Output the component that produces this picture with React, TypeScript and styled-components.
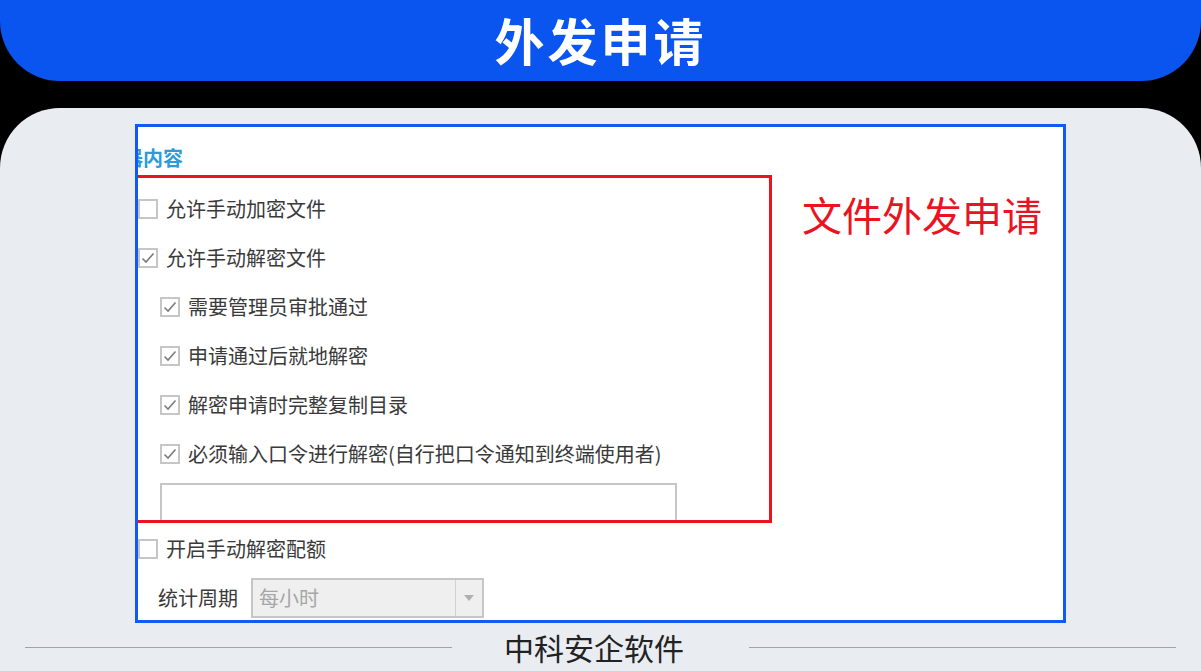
import styled, { createGlobalStyle } from 'styled-components'

const GlobalStyle = createGlobalStyle`
  html, body {
    margin: 0;
    padding: 0;
    background: #000;
  }
  body {
    font-family: 'Noto Sans CJK SC', 'Noto Sans', sans-serif;
  }
`

const Page = styled.div`
  width: 1201px;
  height: 671px;
  overflow: hidden;
  background: #000;
`

const Header = styled.header`
  height: 81px;
  background: #0a55f0;
  border-radius: 0 0 60px 60px;
  display: flex;
  align-items: center;
  justify-content: center;
  padding-bottom: 4px;
  box-sizing: border-box;
`

const Title = styled.h1`
  margin: 0;
  color: #fff;
  font-size: 50px;
  line-height: 1;
  font-weight: 700;
  letter-spacing: 3px;
`

const Panel = styled.main`
  margin-top: 27px;
  height: 563px;
  background: #e9ecf1;
  border-radius: 60px 60px 0 0;
  padding-top: 16px;
  box-sizing: border-box;
  display: flex;
  flex-direction: column;
`

const Frame = styled.section`
  position: relative;
  margin-left: 135px;
  width: 931px;
  height: 499px;
  box-sizing: border-box;
  border: 3px solid #1458f6;
  background: #fff;
  overflow: hidden;
`

const Content = styled.div`
  padding-top: 16px;
  display: flex;
  flex-direction: column;
`

const GroupTitle = styled.div`
  margin-left: -15px;
  height: 30px;
  line-height: 30px;
  margin-bottom: 11.5px;
  font-size: 20px;
  font-weight: 700;
  color: #2b9bd9;
  white-space: nowrap;
`

const Row = styled.label<{ $indent?: boolean }>`
  height: 49px;
  display: flex;
  align-items: center;
  padding-left: ${(p) => (p.$indent ? '22px' : '0')};
  gap: 8px;
  color: #3a3a3a;
  font-size: 20px;
  line-height: 24px;
  white-space: nowrap;
`

const Box = styled.span`
  width: 20px;
  height: 20px;
  box-sizing: border-box;
  border: 2px solid #c6c6c6;
  background: #fff;
  display: flex;
  align-items: center;
  justify-content: center;
  flex: none;
`

const PassInput = styled.div`
  margin: 4.5px 0 3.5px 22px;
  width: 517px;
  height: 38px;
  box-sizing: border-box;
  border: 2px solid #c6c6c6;
  border-bottom: none;
  background: #fff;
`

const FieldRow = styled.div`
  height: 49px;
  display: flex;
  align-items: center;
  padding-left: 20px;
  font-size: 20px;
  line-height: 24px;
  color: #3a3a3a;
`

const Select = styled.div`
  margin-left: 13px;
  width: 233px;
  height: 40px;
  box-sizing: border-box;
  border: 2px solid #c6c6c6;
  background: #efefef;
  display: flex;
`

const SelectValue = styled.span`
  flex: 1;
  padding-left: 6px;
  display: flex;
  align-items: center;
  color: #a6a6a6;
`

const SelectArrow = styled.span`
  width: 26px;
  border-left: 1px solid #d2d2d2;
  display: flex;
  align-items: center;
  justify-content: center;
  &::after {
    content: '';
    border-left: 5px solid transparent;
    border-right: 5px solid transparent;
    border-top: 6px solid #b0b0b0;
  }
`

const RedBox = styled.div`
  position: absolute;
  top: 47.5px;
  left: -3px;
  width: 637px;
  height: 348px;
  box-sizing: border-box;
  border: 3px solid #e9141f;
  pointer-events: none;
`

const RedNote = styled.div`
  position: absolute;
  top: 66.5px;
  left: 664px;
  font-size: 40px;
  line-height: 40px;
  color: #e9141f;
  white-space: nowrap;
`

const Footer = styled.footer`
  height: 48px;
  display: flex;
  align-items: center;
  padding: 0 25px;
`

const Rule = styled.span<{ $w?: number }>`
  height: 1px;
  background: #a3a3a3;
  ${(p) => (p.$w ? `width: ${p.$w}px;` : 'flex: 1;')}
`

const Brand = styled.span`
  margin: 0 65px 0 52px;
  font-size: 30px;
  line-height: 36px;
  color: #222;
  white-space: nowrap;
`

const Check = ({ checked }: { checked?: boolean }) => (
  <Box>
    {checked && (
      <svg width="16" height="16" viewBox="0 0 16 16">
        <polyline
          points="2.5,8.5 6,12 13.5,3.5"
          fill="none"
          stroke="#7b7b7b"
          strokeWidth="1.6"
        />
      </svg>
    )}
  </Box>
)

const options = [
  { text: '需要管理员审批通过' },
  { text: '申请通过后就地解密' },
  { text: '解密申请时完整复制目录' },
  { text: '必须输入口令进行解密(自行把口令通知到终端使用者)' },
]

export default function App() {
  return (
    <Page>
      <GlobalStyle />
      <Header>
        <Title>外发申请</Title>
      </Header>
      <Panel>
        <Frame>
          <Content>
            <GroupTitle>器内容</GroupTitle>
            <Row>
              <Check />
              允许手动加密文件
            </Row>
            <Row>
              <Check checked />
              允许手动解密文件
            </Row>
            {options.map((o) => (
              <Row $indent key={o.text}>
                <Check checked />
                {o.text}
              </Row>
            ))}
            <PassInput />
            <Row>
              <Check />
              开启手动解密配额
            </Row>
            <FieldRow>
              统计周期
              <Select>
                <SelectValue>每小时</SelectValue>
                <SelectArrow />
              </Select>
            </FieldRow>
          </Content>
          <RedBox />
          <RedNote>文件外发申请</RedNote>
        </Frame>
        <Footer>
          <Rule $w={427} />
          <Brand>中科安企软件</Brand>
          <Rule />
        </Footer>
      </Panel>
    </Page>
  )
}
